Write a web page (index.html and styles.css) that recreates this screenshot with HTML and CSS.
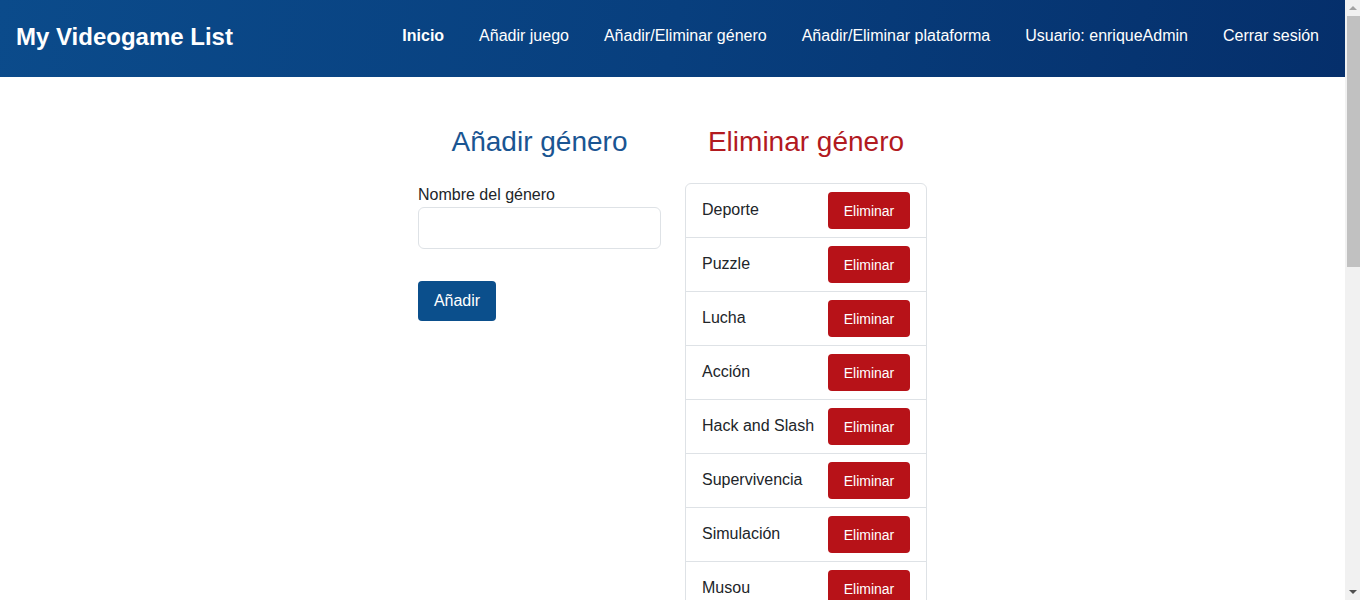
FILE: index.html
```html
<!DOCTYPE html>
<html lang="es">
<head>
<meta charset="utf-8">
<title>My Videogame List</title>
<link rel="stylesheet" href="styles.css">
</head>
<body>
<header class="topbar">
  <a class="brand" href="#">My Videogame List</a>
  <nav class="nav">
    <a class="nav-link active" href="#">Inicio</a>
    <a class="nav-link" href="#">Añadir juego</a>
    <a class="nav-link" href="#">Añadir/Eliminar género</a>
    <a class="nav-link" href="#">Añadir/Eliminar plataforma</a>
    <a class="nav-link" href="#">Usuario: enriqueAdmin</a>
    <a class="nav-link" href="#">Cerrar sesión</a>
  </nav>
</header>
<main class="main">
  <section class="col">
    <h2 class="title title-add">Añadir género</h2>
    <form class="form">
      <label class="label" for="nombre">Nombre del género</label>
      <input class="input" id="nombre" type="text">
      <button class="btn btn-blue" type="button">Añadir</button>
    </form>
  </section>
  <section class="col col-right">
    <h2 class="title title-del">Eliminar género</h2>
    <ul class="list">
      <li class="item"><span>Deporte</span><button class="btn btn-red" type="button">Eliminar</button></li>
      <li class="item"><span>Puzzle</span><button class="btn btn-red" type="button">Eliminar</button></li>
      <li class="item"><span>Lucha</span><button class="btn btn-red" type="button">Eliminar</button></li>
      <li class="item"><span>Acción</span><button class="btn btn-red" type="button">Eliminar</button></li>
      <li class="item"><span>Hack and Slash</span><button class="btn btn-red" type="button">Eliminar</button></li>
      <li class="item"><span>Supervivencia</span><button class="btn btn-red" type="button">Eliminar</button></li>
      <li class="item"><span>Simulación</span><button class="btn btn-red" type="button">Eliminar</button></li>
      <li class="item"><span>Musou</span><button class="btn btn-red" type="button">Eliminar</button></li>
    </ul>
  </section>
</main>
<div class="scrollbar" aria-hidden="true">
  <span class="arrow arrow-up"></span>
  <span class="thumb"></span>
  <span class="arrow arrow-down"></span>
</div>
</body>
</html>
```
FILE: styles.css
```css
* { box-sizing: border-box; }
html, body { margin: 0; padding: 0; }
body {
  font-family: "Liberation Sans", Arial, sans-serif;
  color: #212529;
  background: #fff;
  font-size: 16px;
  margin-right: 15px;
}
.topbar {
  height: 77px;
  display: flex;
  align-items: center;
  justify-content: space-between;
  padding: 0 26px 0 16px;
  background: linear-gradient(100deg, #0b4b8b 0%, #083f7e 50%, #052f6b 100%);
}
.brand {
  color: #fff;
  font-weight: 700;
  font-size: 24px;
  text-decoration: none;
  margin-top: -3px;
}
.nav { display: flex; gap: 35px; margin-top: -6px; }
.nav-link {
  color: #fff;
  text-decoration: none;
  font-size: 16px;
}
.nav-link.active { font-weight: 700; }
.main {
  display: flex;
  justify-content: center;
  gap: 24px;
  padding-top: 48px;
  min-height: 1350px;
}
.col { width: 243px; }
.col-right { width: 242px; }
.title {
  margin: 0;
  font-weight: 400;
  font-size: 28px;
  line-height: 34px;
  text-align: center;
}
.title-add { color: #1a5592; }
.title-del { color: #b21a1f; }
.form { margin-top: 26px; display: flex; flex-direction: column; align-items: flex-start; }
.label { font-size: 16px; line-height: 20px; margin-bottom: 2px; }
.input {
  width: 243px;
  height: 42px;
  border: 1px solid #dee2e6;
  border-radius: 6px;
  font-size: 16px;
  padding: 6px 12px;
}
.btn {
  border: 0;
  color: #fff;
  font-family: inherit;
  cursor: pointer;
}
.btn-blue {
  margin-top: 32px;
  background: #0b4f8c;
  border-radius: 4px;
  width: 78px;
  height: 40px;
  font-size: 16px;
}
.list {
  list-style: none;
  margin: 24px 0 0;
  padding: 0;
  border: 1px solid #dee2e6;
  border-radius: 6px;
}
.item {
  height: 54px;
  display: flex;
  align-items: center;
  justify-content: space-between;
  padding: 0 16px;
  border-top: 1px solid #dee2e6;
  font-size: 16px;
}
.item:first-child { border-top: 0; height: 53px; }
.item span { margin-top: -2px; }
.btn-red {
  background: #b71218;
  border-radius: 4px;
  width: 82px;
  height: 37px;
  font-size: 14px;
}
.scrollbar {
  position: fixed;
  top: 0;
  right: 0;
  width: 15px;
  height: 100vh;
  background: #f1f1f1;
  display: flex;
  flex-direction: column;
  align-items: center;
}
.arrow {
  width: 0;
  height: 0;
  border-left: 4px solid transparent;
  border-right: 4px solid transparent;
}
.arrow-up {
  margin: 6px 0 6px;
  border-bottom: 4px solid #a3a3a3;
}
.arrow-down {
  margin: auto 0 6px;
  border-top: 4px solid #505050;
}
.thumb {
  width: 13px;
  margin-left: 2px;
  height: 251px;
  background: #c1c1c1;
}
```
